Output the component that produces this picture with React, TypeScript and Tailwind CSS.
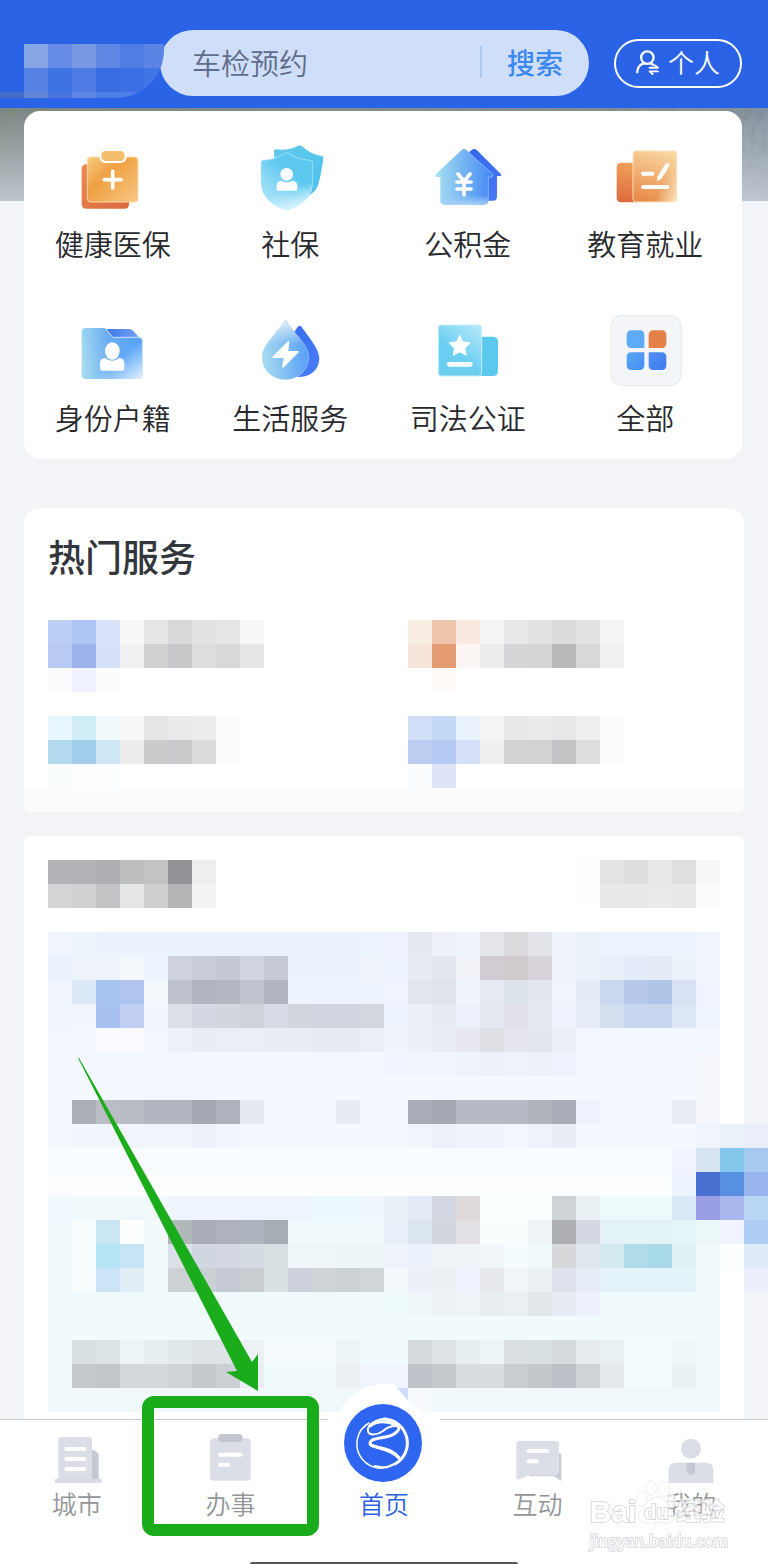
import { ReactNode } from "react"

interface Service {
  label: string
  icon: ReactNode
}

interface Tab {
  label: string
  icon: ReactNode
  active?: boolean
  marked?: boolean
}

// Each row lists cell colours, "*n" repeats a cell and "." leaves it empty
const logoRows = [
  ". 87a6e6 668be6 7a99e4 5f87e4 4f7de4 5a85e5",
  ". 5580e4 3f72e3 4f7be4 3a6de1 3b6fe3 4174e4",
  "436bc7 6387d6 4a78e0 5d86e5 4f7fe6*2 4a7be6",
]

const hotRows = [
  "bbcef6 adc4f4 d8e2f8 f8f8f8 e5e5e5 d9d9d9 e2e2e2 e7e7e7 f6f6f6 .*6 f8ede3 efc5ab fae9e0 f4f4f4 e8e8e8 e2e2e2 dbdbdb e2e2e2 f4f4f4 .*4",
  "b9caf3 9cb3ec d7e0f9 f1f1f1 d1d1d1 c8c8ca dddddd d9d9d9 e6e6e6 .*6 f7e5db e59b72 fcf7f4 ececec d6d6d8 d4d4d6 b9b9bb d9d9d9 f1f1f1 .*4",
  "f9fbfd f0f3fd fcfcfd .*13 fefaf7 .*11",
  ".*28",
  "e6f6fc d0ecf7 eff8fb f7f7f7 e5e5e5 eaeaea ececec fcfcfc .*7 d0def8 c1d8f5 e9f1fc f4f4f4 e8e8e8 ebebeb e8e8e8 efefef fbfbfb .*4",
  "b3d9ef a1cdea cfe6f4 ececec cbcbcb cacacc dcdcdc fcfcfc .*7 bccdf2 b5c9f3 d5dff8 efefef d2d2d2*2 c4c4c6 dddddd fbfbfb .*4",
  "f9fdfd fbfdfe*2 .*12 fbfcfe dee4f8 .*11",
]

const headingRows = [
  "b2b3b7*2 b0adb2 bcbdbf c2c3c4 939497 eeeeee .*15 fdfdfd e3e3e3 dddddd e8e8e8 dfdfdf f8f8f8",
  "d5d5d7 d1d1d3 c1c3c4 e4e6e5 cfcfd1 b6b6b8 f3f3f3 .*15 fefefe e8e8e8*2 eaeaea e8e8e8 fbfbfb",
]

const panelRows = [
  "f0f5fd ecf4fc eaf3fb*11 ebf4fc eef3fd e4e9f2 eef1fa eff3fc e5e7ed dddadd e3e4e9 edf3f9 ebf3fa ebf3fd*4 f0f5fe",
  "e9f2fd eff4fc*2 f4f8fd ebf3fd ced2de c9ccd9 c6c9d3 d2d5df c6c9d6 eaf3fb*3 eef3fb edf3fc e7ebf4 e2e6ef f1f3f6 d3cbd3 d0cacd d9d3da edf2fb ecf2f9 e8eff9 e4ebf9 e4eaf6 eaf2fa eff4fd",
  "f0f4fd dae8f8 a5c4f1 b0c4f0 f4f7fb bec2cd b0b5c1 b3b7c1 bfc3cd b2b6c1 eef4fd*4 eff4fe e2e5ed e0e3ea eef3fc e5eaf3 dce2e9 e2e7f0 eff4fd e3ebf6 ccd8f0 b6c9eb afc4e6 d9e2f4 eff4fe",
  "f1f5fe*2 a8c0ef c1d0f2 f1f5fe dadfe8 d4d8e2 d2d6df ced2db d7dce6 d2d5de d0d4de*2 d3d7df edf3fd e9eef7 e7e9f3 ebf0fb e5e8f1 e2e1ea e4e8f1 edf2fd e6edf8 d4e0ef c7d6ee*2 dde6f5 eff5fe",
  "f2f6ff f4f7ff f9fbff fafbff f2f6ff ecf0f8 e8ecf5 eaeef6*2 e9edf5 e8ecf5 e7eaf3*2 eaeef6 eef3fc ebeff7 e8edf5 e9e7f0 dfe0e5 e6e6ef e2e6ef ebeff7 f2f7ff f3f7ff*5",
  "f3f7ff*14 f1f5ff f0f4fc*2 eff3fb ecf0f8 eff3fb ecf0f8 eef2fc f2f6ff*5 f5f7fd",
  "f4f8ff*27 f6f7fc",
  "f4f8ff abaeb7 babdc6 b9bcc5 b2b6c0*2 a5a8b2 afb2bc e5e9f2 f4f8ff*3 e8ebf3 f3f7ff f4f8ff a9acb6 a5a8b2 b7bac4*3 b1b4bd a9acb6 edf2fc f4f8ff*3 e9ecf5 f5f7fd",
  "f4f8ff f0f4fb*5 edf1f9 f1f4fc f4f8ff*7 f1f5fb ecf0f8 eff3fb*2 f2f6fe eef2fa eaedf5 f4f8ff*5 f0f4fd",
  "f8fbff*28",
  "fbfdfe*28",
  "f0f9fd eff9fc*4 eef5fe*6 ecf8ff*2 eff6fd e8f0f8 e3ebf6 d3d7e1 e1dadd f9fefe*3 ced3d6 eaf1f4 eef9fb*5",
  "f0fafc f7fcfd cae5f4 fdfefe f2fafc b0b8ba a9adb8 afb2bd adb4bd a6adb5 f0f9fc*4 e7eff8 dae5ee d4d6dd e3e0e5 f7fdfc*2 eef4f6 adafb3 d5d8e2 e2f2f7*3 e4f5f8 edf8f9",
  "f0fafc f7fcfd b6e5f6 c8e4f4 f1fafd dae0e8 d1d7e0 d3d8e2 d5dbe3 d9e0e4 eff6f9*2 ecf5f7*2 eef3fc ebf2fb eef3f7*2 f0f5fa f5fcfd eff8fa d8d8db dee8ee d3eaf0 b0dce9 a9dae8 e0f0f5 f0fafb",
  "f0fafc f7fcfd cde4f6 e0edf7 f1fafd cdd1d4 cacfd3 c6cad4 c8cdd1 d9e0e2 ced1dc d0d4d9 ced2d5 d1d6d9 f4f9fd eceff8 ebf0f4 eef3fd e7e9ee f0f5f8 ecf0f5 dde1ec e6edf7 e4f3f9*4 f0fafb",
  "f0fafc*14 effafc eff6f9 ecf2f5 eef4f7 e8eef0 ebeef3 e3e8eb e6ebf4 ecf1fb f1fafc*5",
  "f1fafc*28",
  "f0fafc d8dfe1 dce3e5 ecf4f6 e6eeef e2e9eb dee3e7 dfe3e7 edf1f5 f4fafe*3 eef5f7 f1fafc*2 d5dadd dfe3e8 e6eef1 ecf4f7 dadfe3 d7dfe1 d6dbde e6ebee e8f0f3 f3fcfe*2 eef6f8 f1fafc",
  "f0fafc c4c9cc c3c7cb d3d8dc*2 ced4d7 c4c9cd cbd0d4 e9eef2 f1fafc*3 ebf0f3 eff5fb*2 bdc3c8 c3c9cd d8dde0*2 c8cdd1 c3c8cc bbc1c6 cfd4d7 e4e9ec f3fcfe*2 eaf1f3 f1fafc",
  "f0f8fc*14 d0dcfb f7f9fc f0f8fc*12",
]

const floatRows = [
  ". f0f5fd ebf3fa eaeef8",
  "eff4fe d6e4f2 85c6ec a6caef",
  "ecf3fd 4970d0 5790e0 98b4ec",
  "dae9f7 999ee5 a8b7ed b9d6f4",
  ". ecf7fa f0f4fe b0cdf5",
  ". . fcfdff e0eaf9",
  ". . . eceff9",
]

function parseRow(row: string) {
  return row.split(" ").flatMap((token) => {
    const [color, count] = token.split("*")
    return Array<string>(Number(count ?? 1)).fill(color)
  })
}

function Mosaic({ rows }: { rows: string[] }) {
  return (
    <div aria-hidden="true">
      {rows.map((row, y) => (
        <div key={y} className="flex h-6">
          {parseRow(row).map((color, x) => (
            <div
              key={x}
              className="flex-1"
              style={{ backgroundColor: color === "." ? "transparent" : `#${color}` }}
            />
          ))}
        </div>
      ))}
    </div>
  )
}

function Gradient({ id, from, to, flat }: { id: string; from: string; to: string; flat?: boolean }) {
  return (
    <linearGradient id={id} x1="0" y1="0" x2="1" y2={flat ? "0" : "1"}>
      <stop offset="0" stopColor={from} />
      <stop offset="1" stopColor={to} />
    </linearGradient>
  )
}

function ServiceIcon({ children }: { children: ReactNode }) {
  return (
    <svg viewBox="0 0 216 216" className="size-[72px] overflow-visible" aria-hidden="true">
      {children}
    </svg>
  )
}

const services: Service[] = [
  {
    label: "健康医保",
    icon: (
      <ServiceIcon>
        <defs>
          <Gradient id="med-back" from="#ec8a50" to="#db6840" />
          <linearGradient id="med-front" x1="0" y1="0" x2="1" y2="0.9">
            <stop offset="0" stopColor="#f8cd80" />
            <stop offset="0.4" stopColor="#efa043" />
            <stop offset="1" stopColor="#f6c57f" />
          </linearGradient>
        </defs>
        <rect x="14" y="70" width="142" height="133" rx="13" fill="url(#med-back)" />
        <rect x="31" y="48" width="152" height="135" rx="11" fill="url(#med-front)" stroke="#f9d9ab" strokeWidth="3" />
        <rect x="67" y="25" width="82" height="41" rx="18" fill="#fff" />
        <rect x="73" y="30" width="70" height="30" rx="13" fill="#f4bf6c" />
        <path d="M107 91v50M82 116h50" stroke="#fff" strokeWidth="11" strokeLinecap="round" />
      </ServiceIcon>
    ),
  },
  {
    label: "社保",
    icon: (
      <ServiceIcon>
        <defs>
          <Gradient id="soc-back" from="#62c9ec" to="#4fc2ee" />
          <linearGradient id="soc-front" x1="0.15" y1="0.7" x2="0.5" y2="0.25">
            <stop offset="0" stopColor="#9fdff8" />
            <stop offset="1" stopColor="#5cc8f0" />
          </linearGradient>
          <linearGradient id="soc-fade" x1="0.4" y1="0.7" x2="0.5" y2="1">
            <stop offset="0" stopColor="#d5f3fd" stopOpacity="0" />
            <stop offset="1" stopColor="#d5f3fd" />
          </linearGradient>
        </defs>
        <path d="M60 30q0-5 6-5 40 4 65-10 7-3 13 1 24 23 59 29 6 1 5 8-6 42-13 70-6 28-32 42L65 150Z" fill="url(#soc-back)" />
        <path d="M93 37q5-3 10 0 27 18 67 21 6 1 6 7v60q0 55-73 81-5 2-10 0-72-26-72-81V65q0-6 6-7 38-2 66-21Z" fill="url(#soc-front)" stroke="#b8e9fb" strokeWidth="2" />
        <path d="M93 37q5-3 10 0 27 18 67 21 6 1 6 7v60q0 55-73 81-5 2-10 0-72-26-72-81V65q0-6 6-7 38-2 66-21Z" fill="url(#soc-fade)" />
        <circle cx="98" cy="100" r="19" fill="#fff" />
        <path d="M68 149v-14q0-15 14-16 16 9 33 0 15 2 15 16v9q0 5-5 5H73q-5 0-5-5Z" fill="#fff" />
      </ServiceIcon>
    ),
  },
  {
    label: "公积金",
    icon: (
      <ServiceIcon>
        <defs>
          <Gradient id="fund-back" from="#3465e8" to="#477af6" />
          <Gradient id="fund-front" from="#a6e1f0" to="#4386f5" flat />
          <linearGradient id="fund-fade" x1="0" y1="0.65" x2="0" y2="1">
            <stop offset="0" stopColor="#9bc9fa" stopOpacity="0" />
            <stop offset="1" stopColor="#a8d2fb" />
          </linearGradient>
        </defs>
        <path d="M119 27q8-6 16 1l71 70q5 7-4 7h-7v62q0 12-12 12H90V50Z" fill="url(#fund-back)" />
        <path d="M88 28q8-8 16 0l77 71q5 8-4 9h-8v70q0 13-13 13H38q-13 0-13-13v-70h-9q-10-1-4-9Z" fill="url(#fund-front)" />
        <path d="M25 108h144v70q0 13-13 13H38q-13 0-13-13Z" fill="url(#fund-fade)" />
        <path d="m104 28 77 71q5 8-4 9h-8v70" fill="none" stroke="#a8cbfb" strokeWidth="2" />
        <path d="m78 99 18 22 18-22M96 121v41M75 123h42M75 144h42" fill="none" stroke="#fff" strokeWidth="11" strokeLinecap="round" strokeLinejoin="round" />
      </ServiceIcon>
    ),
  },
  {
    label: "教育就业",
    icon: (
      <ServiceIcon>
        <defs>
          <linearGradient id="edu-back" x1="0.3" y1="0" x2="0.2" y2="1">
            <stop offset="0" stopColor="#f0a05a" />
            <stop offset="1" stopColor="#dc6a3e" />
          </linearGradient>
          <linearGradient id="edu-front" x1="0.7" y1="0" x2="0.4" y2="1">
            <stop offset="0" stopColor="#f8d6a2" />
            <stop offset="1" stopColor="#e98d4a" />
          </linearGradient>
          <linearGradient id="edu-fade" x1="0.65" y1="0.7" x2="1" y2="0.9">
            <stop offset="0" stopColor="#fae0b8" stopOpacity="0" />
            <stop offset="1" stopColor="#fae0b8" />
          </linearGradient>
        </defs>
        <rect x="23" y="65" width="80" height="119" rx="13" fill="url(#edu-back)" />
        <rect x="72" y="30" width="131" height="153" rx="9" fill="url(#edu-front)" stroke="#fbe0bd" strokeWidth="3" />
        <rect x="72" y="30" width="131" height="153" rx="9" fill="url(#edu-fade)" />
        <path d="M102 98h28M102 138h73" stroke="#fff" strokeWidth="12" strokeLinecap="round" />
        <path d="m175 72-23 37" stroke="#fff" strokeWidth="13" strokeLinecap="round" />
        <path d="m146 106-2 15 12-8Z" fill="#fff" />
      </ServiceIcon>
    ),
  },
  {
    label: "身份户籍",
    icon: (
      <ServiceIcon>
        <defs>
          <Gradient id="id-back" from="#3b74ea" to="#74a4f7" flat />
          <linearGradient id="id-front" x1="0" y1="0.5" x2="1" y2="0.4">
            <stop offset="0" stopColor="#a4dbf0" />
            <stop offset="0.45" stopColor="#6cadf3" />
            <stop offset="1" stopColor="#55a2f8" />
          </linearGradient>
          <linearGradient id="id-fade" x1="0.6" y1="0.6" x2="1" y2="1">
            <stop offset="0" stopColor="#e0f0fe" stopOpacity="0" />
            <stop offset="1" stopColor="#e6f3fe" />
          </linearGradient>
        </defs>
        <path d="M80 42h76q8 0 13 6l22 24H95Z" fill="url(#id-back)" />
        <path d="M24 39h56q5 0 8 4l19 24h79q10 0 10 10v105q0 10-10 10H26q-12 0-12-12V51q0-12 10-12Z" fill="url(#id-front)" />
        <path d="M24 39h56q5 0 8 4l19 24h79q10 0 10 10v105q0 10-10 10H26q-12 0-12-12V51q0-12 10-12Z" fill="url(#id-fade)" />
        <path d="m86 41 21 26h79q10 0 10 10" fill="none" stroke="#cfe5fd" strokeWidth="3" />
        <ellipse cx="106" cy="108" rx="22" ry="26" fill="#fff" />
        <path d="M69 160v-14q0-17 16-17 20 17 42 0 15 1 15 17v14q0 7-7 7H76q-7 0-7-7Z" fill="#fff" />
      </ServiceIcon>
    ),
  },
  {
    label: "生活服务",
    icon: (
      <ServiceIcon>
        <defs>
          <Gradient id="life-back" from="#346be9" to="#4a7df8" />
          <linearGradient id="life-front" x1="0" y1="0.6" x2="1" y2="0.5">
            <stop offset="0" stopColor="#a9dcf1" />
            <stop offset="1" stopColor="#569ff5" />
          </linearGradient>
          <linearGradient id="life-fade" x1="0.5" y1="0" x2="0.5" y2="0.4">
            <stop offset="0" stopColor="#e4f3fb" />
            <stop offset="1" stopColor="#e4f3fb" stopOpacity="0" />
          </linearGradient>
        </defs>
        <path d="M131 36q6-7 12 0c18 27 53 65 53 94 0 34-27 56-58 56-34 0-58-25-58-56 0-29 33-67 51-94Z" fill="url(#life-back)" />
        <path d="M94 15c20 34 70 74 70 111 0 40-32 68-70 68s-70-28-70-68c0-37 50-77 70-111Z" fill="url(#life-front)" />
        <path d="M94 15c20 34 70 74 70 111 0 40-32 68-70 68s-70-28-70-68c0-37 50-77 70-111Z" fill="url(#life-fade)" />
        <path d="M94 15c20 34 70 74 70 111 0 28-16 50-38 61" fill="none" stroke="#a9cefb" strokeWidth="2" />
        <path d="m103 77-48 48v4h34l-5 27 4 2 46-46v-4h-31l3-28Z" fill="#fff" />
      </ServiceIcon>
    ),
  },
  {
    label: "司法公证",
    icon: (
      <ServiceIcon>
        <defs>
          <linearGradient id="law-front" x1="0.9" y1="0" x2="0.5" y2="0.6">
            <stop offset="0" stopColor="#b5e8f9" />
            <stop offset="1" stopColor="#6ccff1" />
          </linearGradient>
        </defs>
        <rect x="110" y="65" width="88" height="118" rx="14" fill="#5bc8ee" />
        <rect x="19" y="30" width="130" height="153" rx="9" fill="url(#law-front)" stroke="#c5eefb" strokeWidth="3" />
        <path d="m83 62 9 19 21 3-15 15 4 21-19-10-19 10 4-21-15-15 21-3Z" fill="#fff" stroke="#fff" strokeWidth="4" strokeLinejoin="round" />
        <path d="M52 148h63" stroke="#fff" strokeWidth="14" strokeLinecap="round" />
      </ServiceIcon>
    ),
  },
  {
    label: "全部",
    icon: (
      <ServiceIcon>
        <defs>
          <Gradient id="all-mid" from="#5aa4f4" to="#468ff3" />
          <Gradient id="all-end" from="#5090f2" to="#3f7cf0" />
        </defs>
        <rect x="6" y="1" width="211" height="211" rx="34" fill="#f4f5f8" stroke="#e6e8ec" strokeWidth="3" />
        <path d="M67 46h25q14 0 14 14v39H67q-14 0-14-14V60q0-14 14-14Z" fill="#5dacf5" />
        <path d="M133 46h25q14 0 14 14v25q0 14-14 14h-39V60q0-14 14-14Z" fill="#e48148" />
        <path d="M67 112h39v39q0 14-14 14H67q-14 0-14-14v-25q0-14 14-14Z" fill="url(#all-mid)" />
        <path d="M119 112h39q14 0 14 14v25q0 14-14 14h-25q-14 0-14-14Z" fill="url(#all-end)" />
      </ServiceIcon>
    ),
  },
]

function TabIcon({ children }: { children: ReactNode }) {
  return (
    <svg viewBox="0 0 144 144" className="mt-[15px] size-12 overflow-visible" aria-hidden="true">
      {children}
    </svg>
  )
}

const tabs: Tab[] = [
  {
    label: "城市",
    icon: (
      <TabIcon>
        <path d="M112 43q25 6 25 18v72h-25Z" fill="#c5c8d3" />
        <rect x="16" y="6" width="101" height="130" rx="8" fill="#dcdee7" />
        <rect x="5" y="131" width="142" height="13" rx="6" fill="#d9dbe4" />
        <path d="M40 42h54M40 72h54M40 102h54" stroke="#fff" strokeWidth="12" strokeLinecap="round" />
      </TabIcon>
    ),
  },
  {
    label: "办事",
    marked: true,
    icon: (
      <TabIcon>
        <rect x="12" y="10" width="122" height="127" rx="12" fill="#dcdee7" />
        <rect x="36" y="-3" width="74" height="24" rx="12" fill="#c3c6d0" />
        <path d="M42 59h62M42 89h25" stroke="#fff" strokeWidth="12" strokeLinecap="round" />
      </TabIcon>
    ),
  },
  {
    label: "首页",
    active: true,
    icon: (
      <svg viewBox="0 0 112 99" className="-mt-9 h-[99px] w-28" aria-hidden="true">
        <path d="M0 35q8-2 14-12Q31 0 56 0h10l10 12q14 18 36 23v64H0Z" fill="#fff" />
        <circle cx="55" cy="59" r="39" fill="#2e66f2" />
        <g fill="none" stroke="#fff" strokeLinecap="round">
          <path d="M41 39A24 24 0 0 0 65 81" strokeWidth="1.5" />
          <path d="M56 35a24 24 0 0 1 11 45" strokeWidth="3" />
          <path d="M66 80a24 24 0 0 1-19 2" strokeWidth="2" />
          <path d="M56 35c-12 1-17 8-16 12 1 5 10 4 15 0 4-4 8-5 13-5" strokeWidth="2" />
          <path d="M42 42c7-6 18-5 26-1 4 2 4 5-2 9-8 5-23 3-24 9 0 6 19 3 29 15" strokeWidth="3" />
          <path d="M43 61c8 4 20 2 28 13" strokeWidth="3" />
        </g>
      </svg>
    ),
  },
  {
    label: "互动",
    icon: (
      <TabIcon>
        <path d="M46 55h90q6 0 6 6v77l-22-14H46Z" fill="#c9ccd6" />
        <path d="M17 18h108q10 0 10 10v83q0 10-10 10H44L18 132q-10 5-11-6V28q0-10 10-10Z" fill="#dcdee7" />
        <path d="M44 48h56M44 79h25" stroke="#fff" strokeWidth="12" strokeLinecap="round" />
      </TabIcon>
    ),
  },
  {
    label: "我的",
    icon: (
      <TabIcon>
        <circle cx="72" cy="41" r="30" fill="#dcdee7" />
        <path d="M27 83h90q22 0 22 22v39H5v-39q0-22 22-22Z" fill="#dcdee7" />
        <path d="M59 83h25v24q0 12-12 12t-13-12Z" fill="#c5c8d3" />
      </TabIcon>
    ),
  },
]

function Header() {
  return (
    <header className="flex h-[108px] items-center bg-[#2a63e5] pt-[18px] pr-[26px]">
      {/* City logo */}
      <div className="z-10 mt-4 h-[54px] w-[164px] shrink-0 overflow-hidden rounded-br-[48px]" aria-hidden="true">
        <div className="w-[168px]">
          <Mosaic rows={logoRows} />
        </div>
      </div>
      <form className="-ml-1 flex h-[66px] min-w-0 flex-1 items-center rounded-full bg-[#d0dff9] pr-[26px] pb-0.5 pl-8">
        <input
          type="text"
          aria-label="搜索服务"
          placeholder="车检预约"
          className="min-w-0 flex-1 bg-transparent text-[29px] leading-10 font-[350] outline-none placeholder:text-[#5f6c8c]"
        />
        <span className="mr-[25px] h-8 w-0.5 bg-[#a9c8f2]" />
        <button type="button" className="text-[28px] leading-10 font-medium text-[#3b88f2]">
          搜索
        </button>
      </form>
      <button
        type="button"
        className="ml-[25px] flex h-[49px] w-32 shrink-0 items-center justify-center gap-2 rounded-full border-2 border-white pb-0.5 text-[26px] leading-10 font-[350] text-white"
      >
        <svg viewBox="0 0 72 76" className="h-[25px] w-6 overflow-visible" fill="none" stroke="#fff" strokeWidth="7" strokeLinecap="round" aria-hidden="true">
          <circle cx="34" cy="23" r="19" />
          <path d="M3 68q1-23 23-28M44 41l8 4" />
          <path d="M41 54h25l-8-7M66 65H41l9 8" strokeWidth="6" strokeLinejoin="round" />
        </svg>
        个人
      </button>
    </header>
  )
}

// Rocky hillside fading into mist
function Scenery() {
  return (
    <svg className="absolute inset-x-0 top-0 h-[93px] w-full" preserveAspectRatio="none" aria-hidden="true">
      <defs>
        <linearGradient id="hill" x1="0" y1="0" x2="1" y2="0">
          <stop offset="0" stopColor="#7b867e" />
          <stop offset="1" stopColor="#8593a0" />
        </linearGradient>
        <linearGradient id="mist" x1="0" y1="0" x2="0" y2="1">
          <stop offset="0" stopColor="#cfd5df" stopOpacity="0" />
          <stop offset="1" stopColor="#cfd5df" stopOpacity="0.8" />
        </linearGradient>
        <filter id="rock" x="0" y="0" width="1" height="1">
          <feTurbulence type="fractalNoise" baseFrequency="0.16 0.08" numOctaves="3" seed="4" />
          <feColorMatrix type="matrix" values="0 0 0 0 0.2  0 0 0 0 0.24  0 0 0 0 0.26  2.4 0 0 0 -1" />
        </filter>
      </defs>
      <rect width="100%" height="100%" fill="url(#hill)" />
      <rect width="100%" height="100%" filter="url(#rock)" />
      <rect width="100%" height="100%" fill="url(#mist)" />
    </svg>
  )
}

function Watermark() {
  return (
    <div
      className="pointer-events-none absolute right-10 bottom-4 text-white opacity-75 [-webkit-text-stroke:2px_#cfcfd3] [paint-order:stroke_fill]"
      aria-hidden="true"
    >
      <div className="flex h-10 items-center font-[Liberation_Sans,'Noto_Sans_CJK_SC',sans-serif] text-[30px] leading-10 font-bold">
        <span>Bai</span>
        <span className="relative flex w-10 justify-center text-[20px]">
          <svg viewBox="0 0 40 48" className="absolute -top-4 left-0 h-12 w-10 overflow-visible" fill="#fff" stroke="#cfcfd3" strokeWidth="1">
            <ellipse cx="6" cy="23" rx="5" ry="7" />
            <ellipse cx="15" cy="12" rx="5" ry="7" />
            <ellipse cx="28" cy="13" rx="5" ry="7" />
            <ellipse cx="36" cy="25" rx="4" ry="7" />
            <path d="M21 21c8 0 9 8 14 13 6 5 2 14-6 13-6-1-10-1-16 0-9 1-14-8-7-14 5-5 7-12 15-12Z" />
          </svg>
          <span className="relative">du</span>
        </span>
        <span className="text-[24px]">经验</span>
      </div>
      <div className="text-[16px] leading-4">jingyan.baidu.com</div>
    </div>
  )
}

function TabBar() {
  return (
    <nav className="relative border-t border-[#c9cbce] bg-white">
      <ul className="flex">
        {tabs.map((tab) => (
          <li key={tab.label} className="relative h-[116px] flex-1">
            <a
              href="#"
              className={`flex flex-col items-center text-[25px] leading-9 font-[350] ${
                tab.active ? "text-[#2c62df]" : "text-[#949599]"
              }`}
            >
              {tab.icon}
              <span className="mt-0.5">{tab.label}</span>
            </a>
            {tab.marked && (
              <>
                <div className="pointer-events-none absolute -inset-x-3 -top-6 bottom-0 rounded-xl border-12 border-[#1bac1b]" />
                <svg viewBox="0 0 188 336" className="pointer-events-none absolute bottom-full -left-20 mb-7 h-[336px] w-[188px]" aria-hidden="true">
                  <path d="m4 2 1 0 173 304 6-8v37l-32-19 11-1Z" fill="#1bac1b" />
                </svg>
              </>
            )}
          </li>
        ))}
      </ul>
      <div className="flex h-7 items-end justify-center">
        <span className="h-0.5 w-[268px] rounded-t-full bg-[#55565a]" />
      </div>
      <Watermark />
    </nav>
  )
}

export default function App() {
  return (
    <div className="relative bg-[#f3f4f8] font-['Noto_Sans_CJK_SC',sans-serif]">
      <Header />

      <main>
        {/* Services over the scenery banner */}
        <section className="relative pt-[3px] pr-[26px] pl-6">
          <Scenery />
          <div className="relative grid grid-cols-4 gap-y-[52px] rounded-2xl bg-white pt-[30px] pr-2 pb-[22px]">
            {services.map((service) => (
              <a key={service.label} href="#" className="flex flex-col items-center gap-2.5 text-[29px] leading-10 font-[350] text-[#28292d]">
                {service.icon}
                {service.label}
              </a>
            ))}
          </div>
        </section>

        <section className="mx-6 mt-[49px] overflow-hidden rounded-t-2xl rounded-b-md bg-white">
          <h2 className="px-6 pt-6 text-[37px] leading-[48px] font-medium text-[#34363e]">热门服务</h2>
          <div className="mt-10 px-6">
            <Mosaic rows={hotRows} />
          </div>
          <div className="h-6 bg-[#fcfcfd]" />
        </section>

        <section className="relative mt-6">
          <div className="mx-6 rounded-t-md bg-white px-6 pt-6 pb-[7px]">
            <Mosaic rows={headingRows} />
            <div className="mt-6">
              <Mosaic rows={panelRows} />
            </div>
          </div>
          {/* Floating assistant */}
          <div className="absolute top-72 right-0 w-24">
            <Mosaic rows={floatRows} />
          </div>
        </section>
      </main>

      <TabBar />
    </div>
  )
}
